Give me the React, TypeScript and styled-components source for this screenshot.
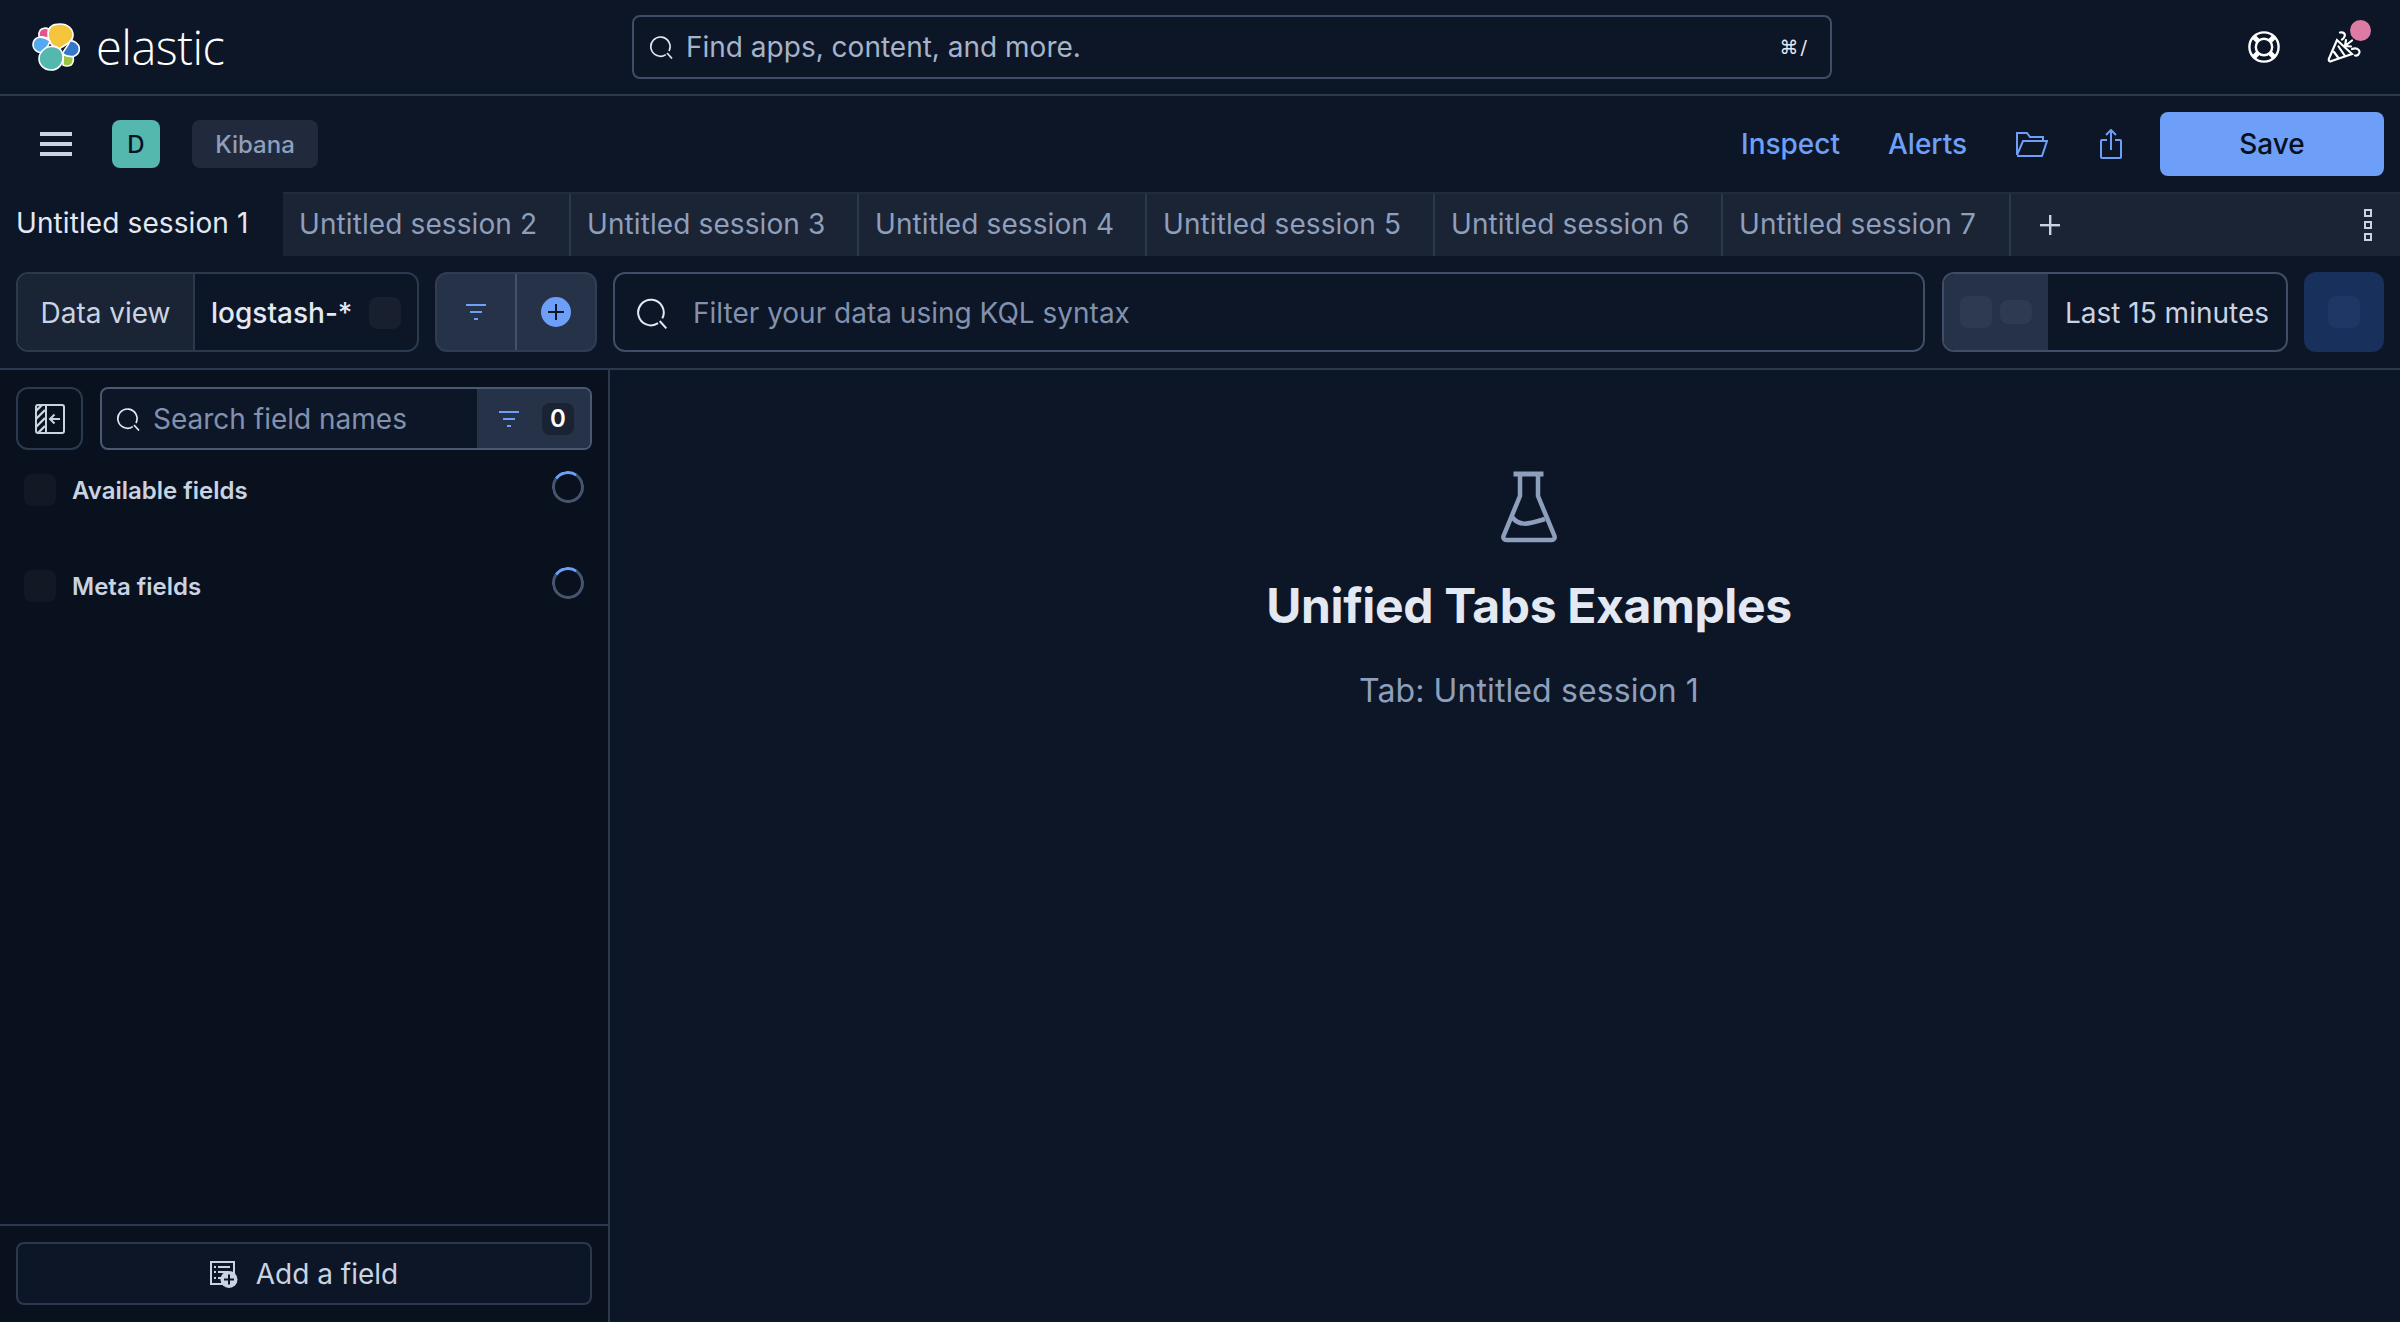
import { createGlobalStyle, styled } from "styled-components";

const Global = createGlobalStyle`
  html, body {
    margin: 0;
    padding: 0;
    background: #0c1627;
  }
  * { box-sizing: border-box; }
  #root { height: 1322px; overflow: hidden; }
`;

const Page = styled.div`
  width: 2400px;
  height: 1322px;
  display: flex;
  flex-direction: column;
  font-family: Inter, "Liberation Sans", sans-serif;
  font-size: 28px;
  color: #cad3e2;
  background: #0c1627;
`;

const Header = styled.header`
  height: 96px;
  flex: none;
  display: flex;
  align-items: center;
  padding: 0 33px 0 32px;
  border-bottom: 2px solid #2b394f;
`;

const LogoLink = styled.div`
  width: 600px;
  display: flex;
  align-items: center;
  gap: 16px;
`;

const LogoText = styled.span`
  font-family: "Open Sans", sans-serif;
  font-size: 47px;
  font-weight: 300;
  line-height: 48px;
  color: #ffffff;
  letter-spacing: -0.5px;
`;

const GlobalSearch = styled.div`
  width: 1200px;
  height: 64px;
  display: flex;
  align-items: center;
  gap: 12px;
  padding: 0 21px 0 16px;
  border: 2px solid #3f4e66;
  border-radius: 8px;
  color: #a6b3c9;
`;

const Grow = styled.span`
  flex: 1;
`;

const Kbd = styled.span`
  font-family: "DejaVu Sans", sans-serif;
  font-size: 19px;
  color: #e3e8f2;
  letter-spacing: 2px;
`;

const HeaderIcons = styled.div`
  margin-left: auto;
  display: flex;
  align-items: center;
  gap: 47px;
`;

const PartyWrap = styled.div`
  position: relative;
  width: 40px;
  height: 32px;
`;

const NotifyDot = styled.span`
  position: absolute;
  top: -11px;
  left: 23px;
  width: 21px;
  height: 21px;
  border-radius: 50%;
  background: #dd7ba5;
`;

const ActionBar = styled.div`
  height: 96px;
  flex: none;
  display: flex;
  align-items: center;
  padding: 0 16px 0 40px;
`;

const Avatar = styled.div`
  width: 48px;
  height: 48px;
  margin-left: 40px;
  border-radius: 8px;
  background: #54b8ae;
  color: #07101f;
  font-size: 24px;
  font-weight: 500;
  display: flex;
  align-items: center;
  justify-content: center;
`;

const AppBadge = styled.div`
  width: 126px;
  height: 48px;
  margin-left: 32px;
  border-radius: 8px;
  background: #202a3c;
  color: #8e9fbc;
  font-size: 24px;
  font-weight: 500;
  display: flex;
  align-items: center;
  justify-content: center;
`;

const ActionLink = styled.span<{ $left: number }>`
  margin-left: ${(p) => p.$left}px;
  color: #6ea0f8;
  font-weight: 500;
`;

const ActionIcon = styled.span<{ $left: number }>`
  margin-left: ${(p) => p.$left}px;
  display: flex;
`;

const SaveButton = styled.button`
  width: 224px;
  height: 64px;
  margin-left: 38px;
  border: none;
  border-radius: 8px;
  background: #6e9ff8;
  color: #07101f;
  font: 500 28px Inter, sans-serif;
`;

const TabBar = styled.div`
  height: 64px;
  flex: none;
  display: flex;
  align-items: stretch;
  background: #1a2434;
  border-top: 2px solid #202b3e;
`;

const Tab = styled.div<{ $active?: boolean }>`
  width: ${(p) => (p.$active ? 283 : 288)}px;
  margin-top: ${(p) => (p.$active ? -2 : 0)}px;
  padding: 0 0 2px ${(p) => (p.$active ? 16 : 16)}px;
  display: flex;
  align-items: center;
  white-space: nowrap;
  letter-spacing: 0.1px;
  background: ${(p) => (p.$active ? "#0c1627" : "transparent")};
  color: ${(p) => (p.$active ? "#e3e8f2" : "#8e9fbc")};
  border-right: ${(p) => (p.$active ? "none" : "2px solid #2b394f")};
`;

const TabTools = styled.div`
  flex: 1;
  display: flex;
  align-items: center;
  justify-content: space-between;
  padding: 0 28px 0 29px;
`;

const FilterBar = styled.div`
  height: 114px;
  flex: none;
  display: flex;
  align-items: flex-start;
  padding: 16px 16px 0;
  border-bottom: 2px solid #2b394f;
`;

const DataViewGroup = styled.div`
  width: 403px;
  height: 80px;
  display: flex;
  border: 2px solid #2b394f;
  border-radius: 12px;
  overflow: hidden;
`;

const DataViewLabel = styled.div`
  width: 177px;
  display: flex;
  align-items: center;
  justify-content: center;
  padding-top: 1px;
  background: #1a2434;
  border-right: 2px solid #2b394f;
`;

const DataViewValue = styled.div`
  flex: 1;
  display: flex;
  align-items: center;
  justify-content: space-between;
  padding: 1px 16px 0 16px;
  font-weight: 500;
  color: #e3e8f2;
`;

const Skeleton = styled.span<{ $w?: number; $h?: number; $bg?: string }>`
  display: block;
  flex: none;
  width: ${(p) => p.$w ?? 32}px;
  height: ${(p) => p.$h ?? 32}px;
  border-radius: 8px;
  background: ${(p) => p.$bg ?? "#181f2e"};
`;

const FilterButtons = styled.div`
  width: 162px;
  height: 80px;
  margin-left: 16px;
  display: flex;
  background: #263247;
  border: 2px solid #2f3c52;
  border-radius: 12px;
  overflow: hidden;
`;

const FilterCell = styled.div<{ $divider?: boolean }>`
  flex: 1;
  display: flex;
  align-items: center;
  justify-content: center;
  border-left: ${(p) => (p.$divider ? "2px solid #445269" : "none")};
`;

const QueryInput = styled.div`
  width: 1312px;
  height: 80px;
  margin-left: 16px;
  display: flex;
  align-items: center;
  gap: 24px;
  padding: 1px 0 0 22px;
  border: 2px solid #3f4e66;
  border-radius: 12px;
  color: #8291ad;
`;

const TimePicker = styled.div`
  width: 346px;
  height: 80px;
  margin-left: 17px;
  display: flex;
  border: 2px solid #3f4e66;
  border-radius: 12px;
  overflow: hidden;
`;

const TimeQuick = styled.div`
  width: 104px;
  flex: none;
  display: flex;
  align-items: center;
  gap: 8px;
  padding-left: 16px;
  background: #263247;
`;

const TimeValue = styled.div`
  flex: 1;
  display: flex;
  align-items: center;
  justify-content: center;
  padding-top: 1px;
  white-space: nowrap;
`;

const RefreshButton = styled.div`
  width: 80px;
  height: 80px;
  margin-left: 16px;
  display: flex;
  align-items: center;
  justify-content: center;
  background: #17305c;
  border-radius: 12px;
`;

const Main = styled.div`
  flex: 1;
  min-height: 0;
  display: flex;
`;

const Sidebar = styled.aside`
  width: 610px;
  flex: none;
  display: flex;
  flex-direction: column;
  background: #09111f;
  border-right: 2px solid #2b394f;
`;

const SidebarBody = styled.div`
  flex: 1;
  padding: 17px 16px 0 16px;
`;

const SearchRow = styled.div`
  display: flex;
  gap: 17px;
`;

const CollapseButton = styled.div`
  width: 67px;
  height: 63px;
  display: flex;
  align-items: center;
  justify-content: center;
  flex: none;
  border: 2px solid #2b394f;
  border-radius: 12px;
`;

const FieldSearch = styled.div`
  flex: 1;
  height: 63px;
  display: flex;
  border: 2px solid #4a5971;
  border-radius: 8px;
  overflow: hidden;
  background: #0c1627;
`;

const FieldSearchInput = styled.div`
  flex: 1;
  display: flex;
  align-items: center;
  gap: 12px;
  padding-left: 15px;
  color: #8291ad;
`;

const FieldFilter = styled.div`
  width: 113px;
  display: flex;
  align-items: center;
  justify-content: space-between;
  padding: 0 16px 0 22px;
  background: #263247;
`;

const CountBadge = styled.span`
  width: 32px;
  height: 32px;
  display: flex;
  align-items: center;
  justify-content: center;
  border-radius: 8px;
  background: #1a2333;
  color: #ffffff;
  font-size: 24px;
  font-weight: 600;
`;

const FieldSection = styled.div<{ $top: number }>`
  height: 36px;
  margin-top: ${(p) => p.$top}px;
  display: flex;
  align-items: center;
  padding: 0 8px 0 8px;
  gap: 16px;
  font-size: 24px;
  font-weight: 600;
  color: #cad3e2;
`;

const SectionTitle = styled.span`
  flex: 1;
`;

const Spinner = styled.span`
  width: 32px;
  height: 32px;
  margin-top: -6px;
  border-radius: 50%;
  border: 3px solid #46556e;
  border-top-color: #6e9ff8;
  transform: rotate(-10deg);
`;

const SidebarFooter = styled.div`
  flex: none;
  height: 98px;
  padding: 16px 16px 0 16px;
  border-top: 2px solid #2b394f;
`;

const AddFieldButton = styled.button`
  width: 100%;
  height: 63px;
  display: flex;
  align-items: center;
  justify-content: center;
  gap: 18px;
  border: 2px solid #2b394f;
  border-radius: 8px;
  background: #0c1627;
  color: #cad3e2;
  font: 400 28px Inter, sans-serif;
`;

const Content = styled.main`
  flex: 1;
  display: flex;
  flex-direction: column;
  align-items: center;
  padding: 101px 0 0 48px;
`;

const Title = styled.h1`
  margin: 35px 0 0;
  font-size: 48px;
  line-height: 56px;
  font-weight: 700;
  letter-spacing: -0.35px;
  color: #e3e8f2;
`;

const Subtitle = styled.p`
  margin: 35px 0 0;
  font-size: 32px;
  line-height: 44px;
  letter-spacing: 0.1px;
  color: #8e9fbc;
`;

function SearchIcon({ size = 24, color = "#e3e8f2" }: { size?: number; color?: string }) {
  return (
    <svg width={size} height={size} viewBox="0 0 24 24" fill="none" stroke={color} strokeWidth={size > 26 ? 1.5 : 1.7} style={{ flex: "none" }}>
      <path d="M15.8 19.6A9.6 9.6 0 1 1 19 16" />
      <path d="M17 18l5 5.5" />
    </svg>
  );
}

function FilterIcon() {
  return (
    <svg width="20" height="16" viewBox="0 0 20 16" fill="#6e9ff8">
      <rect x="0" y="0" width="20" height="2" />
      <rect x="4" y="7" width="12" height="2" />
      <rect x="8" y="14" width="4" height="2" />
    </svg>
  );
}

function ElasticLogo() {
  return (
    <svg width="48" height="48" viewBox="0 0 48 48">
      <g stroke="#ffffff" strokeWidth="1.6">
        <path fill="#9ac63f" d="M31 32l10 1.500c1 3 0 7-2 8.500-3 1.500-6 1-8 0z" />
        <path fill="#e7518e" d="M8 7.500C10 5 14 4.500 16.500 6c.5 3 .5 6 0 9L7 13.500C6.500 11 7 9 8 7.500z" />
        <path fill="#f5c63d" d="M16 10C16.500 4 21 1 28 1c8 0 13 5 13 11 0 3-1 5-3 7l-11 7-7-4c-3-3-4-7-4-12z" />
        <path fill="#3478cc" d="M38 18c4-1 9 3 9.300 7.500C47.500 29 45 32 41.500 33.500 37 34 33 32.500 30.500 30.500 32 27 36 23 38 18z" />
        <path fill="#53aaef" d="M6 14.500c4-1 9 1 12 3.500-1 4-4 8-8.500 11.500C5 30 1 26 1 22s2-6.500 5-7.500z" />
        <path fill="#54b8ae" d="M18 23.500c7-1 13 3 13 11 0 7-5 12.500-12 12.500S7 42 7 35.500C7 30 12 24.500 18 23.500z" />
      </g>
    </svg>
  );
}

function LifeRingIcon() {
  return (
    <svg width="32" height="32" viewBox="0 0 32 32" fill="none" stroke="#ffffff" strokeWidth="2.400">
      <circle cx="16" cy="16" r="14.600" />
      <circle cx="16" cy="16" r="8.200" />
      <path d="M5.500 5.500l5 5M26.500 5.500l-5 5M5.500 26.500l5-5M26.500 26.500l-5-5" strokeWidth="5" />
    </svg>
  );
}

function PartyIcon() {
  return (
    <svg width="34" height="32" viewBox="0 0 34 32" fill="none" stroke="#ffffff" strokeWidth="2.200" strokeLinecap="round">
      <path d="M10 9L2 27.500C1.300 30 2.500 31 4.500 30L25 23z" />
      <path d="M7 21l4.500 6M11.500 15.500l6.500 9.500" />
      <path d="M13 1.500c4-.5 5.500 1.500 4.500 4-.5 1.500-1.500 2.500-2.500 3" />
      <path d="M18 15l7-5.500M19 9l-1 6 6 .5" />
      <path d="M25 18c4-1.500 7 0 7.500 2.500.3 2.500-2 4.500-4.500 4" />
    </svg>
  );
}

function MenuIcon() {
  return (
    <svg width="32" height="24" viewBox="0 0 32 24" fill="#cad3e2" style={{ flex: "none" }}>
      <rect y="0" width="32" height="4" />
      <rect y="10" width="32" height="4" />
      <rect y="20" width="32" height="4" />
    </svg>
  );
}

function FolderIcon() {
  return (
    <svg width="32" height="26" viewBox="0 0 32 26" fill="none" stroke="#6e9ff8" strokeWidth="2">
      <path d="M1 24V2h10l3 4h13v4" />
      <path d="M1 25h25l5-15H7L1 24" />
    </svg>
  );
}

function ShareIcon() {
  return (
    <svg width="22" height="30" viewBox="0 0 22 30" fill="none" stroke="#6e9ff8" strokeWidth="2">
      <path d="M7 11H2a1 1 0 0 0-1 1v16a1 1 0 0 0 1 1h18a1 1 0 0 0 1-1V12a1 1 0 0 0-1-1h-5" />
      <path d="M11 21V1M6 6l5-5 5 5" />
    </svg>
  );
}

function PlusIcon() {
  return (
    <svg width="20" height="20" viewBox="0 0 20 20" fill="#cad3e2">
      <rect x="9" y="0" width="2.400" height="20" />
      <rect x="0" y="9" width="20" height="2.400" />
    </svg>
  );
}

function DotsIcon() {
  return (
    <svg width="8" height="32" viewBox="0 0 8 32" fill="none" stroke="#cad3e2" strokeWidth="2">
      <rect x="1" y="1" width="6" height="6" />
      <rect x="1" y="13" width="6" height="6" />
      <rect x="1" y="25" width="6" height="6" />
    </svg>
  );
}

function AddCircleIcon() {
  return (
    <svg width="30" height="30" viewBox="0 0 30 30">
      <circle cx="15" cy="15" r="15" fill="#6e9ff8" />
      <path d="M15 7v16M7 15h16" stroke="#0c1627" strokeWidth="2" />
    </svg>
  );
}

function CollapseIcon() {
  return (
    <svg width="30" height="30" viewBox="0 0 30 30" fill="none" stroke="#cad3e2" strokeWidth="2">
      <rect x="1" y="1" width="28" height="28" rx="2" />
      <path d="M11 1v28" />
      <path d="M1 7l6-6M1 15L10 6M1 23l9-9M3 29l7-7" strokeWidth="2.400" />
      <path d="M25 15H15M19.500 10.500L15 15l4.500 4.500" />
    </svg>
  );
}

function AddFieldIcon() {
  return (
    <svg width="28" height="28" viewBox="0 0 28 28" fill="none" stroke="#cad3e2" strokeWidth="2" style={{ flex: "none" }}>
      <path d="M24 14V2H1v22h13" />
      <path d="M4 7h2M8 7h12M4 12h2M8 12h10M4 18h2M8 18h4" />
      <circle cx="19" cy="19.500" r="8.500" fill="#cad3e2" stroke="none" />
      <path d="M19 14.500v10M14 19.500h10" stroke="#0c1627" />
    </svg>
  );
}

function FlaskIcon() {
  return (
    <svg width="56" height="72" viewBox="0 0 56 72" fill="none" stroke="#8e9fbc" strokeWidth="4.500" strokeLinejoin="round">
      <path d="M12.500 3h30" strokeWidth="5" />
      <path d="M19 3v22L2.500 65c-.6 2 .5 4 3 4h45c2.500 0 3.600-2 3-4L37 25V3" />
      <path d="M11 46c7 9 14 8 33 2" />
    </svg>
  );
}

const tabs = [1, 2, 3, 4, 5, 6, 7];

export default function App() {
  return (
    <Page>
      <Global />
      <Header>
        <LogoLink>
          <ElasticLogo />
          <LogoText>elastic</LogoText>
        </LogoLink>
        <GlobalSearch>
          <SearchIcon />
          <Grow>Find apps, content, and more.</Grow>
          <Kbd>⌘/</Kbd>
        </GlobalSearch>
        <HeaderIcons>
          <LifeRingIcon />
          <PartyWrap>
            <PartyIcon />
            <NotifyDot />
          </PartyWrap>
        </HeaderIcons>
      </Header>
      <ActionBar>
        <MenuIcon />
        <Avatar>D</Avatar>
        <AppBadge>Kibana</AppBadge>
        <ActionLink $left={1423}>Inspect</ActionLink>
        <ActionLink $left={48}>Alerts</ActionLink>
        <ActionIcon $left={49}><FolderIcon /></ActionIcon>
        <ActionIcon $left={52}><ShareIcon /></ActionIcon>
        <SaveButton>Save</SaveButton>
      </ActionBar>
      <TabBar>
        {tabs.map((n) => (
          <Tab key={n} $active={n === 1}>Untitled session {n}</Tab>
        ))}
        <TabTools>
          <PlusIcon />
          <DotsIcon />
        </TabTools>
      </TabBar>
      <FilterBar>
        <DataViewGroup>
          <DataViewLabel>Data view</DataViewLabel>
          <DataViewValue>
            logstash-*
            <Skeleton />
          </DataViewValue>
        </DataViewGroup>
        <FilterButtons>
          <FilterCell><FilterIcon /></FilterCell>
          <FilterCell $divider><AddCircleIcon /></FilterCell>
        </FilterButtons>
        <QueryInput>
          <SearchIcon size={32} />
          Filter your data using KQL syntax
        </QueryInput>
        <TimePicker>
          <TimeQuick>
            <Skeleton $bg="#2e3a50" />
            <Skeleton $h={24} $bg="#2e3a50" />
          </TimeQuick>
          <TimeValue>Last 15 minutes</TimeValue>
        </TimePicker>
        <RefreshButton>
          <Skeleton $bg="#1f3765" />
        </RefreshButton>
      </FilterBar>
      <Main>
        <Sidebar>
          <SidebarBody>
            <SearchRow>
              <CollapseButton><CollapseIcon /></CollapseButton>
              <FieldSearch>
                <FieldSearchInput>
                  <SearchIcon />
                  Search field names
                </FieldSearchInput>
                <FieldFilter>
                  <FilterIcon />
                  <CountBadge>0</CountBadge>
                </FieldFilter>
              </FieldSearch>
            </SearchRow>
            <FieldSection $top={22}>
              <Skeleton $bg="#111925" />
              <SectionTitle>Available fields</SectionTitle>
              <Spinner />
            </FieldSection>
            <FieldSection $top={60}>
              <Skeleton $bg="#111925" />
              <SectionTitle>Meta fields</SectionTitle>
              <Spinner />
            </FieldSection>
          </SidebarBody>
          <SidebarFooter>
            <AddFieldButton>
              <AddFieldIcon />
              Add a field
            </AddFieldButton>
          </SidebarFooter>
        </Sidebar>
        <Content>
          <FlaskIcon />
          <Title>Unified Tabs Examples</Title>
          <Subtitle>Tab: Untitled session 1</Subtitle>
        </Content>
      </Main>
    </Page>
  );
}
